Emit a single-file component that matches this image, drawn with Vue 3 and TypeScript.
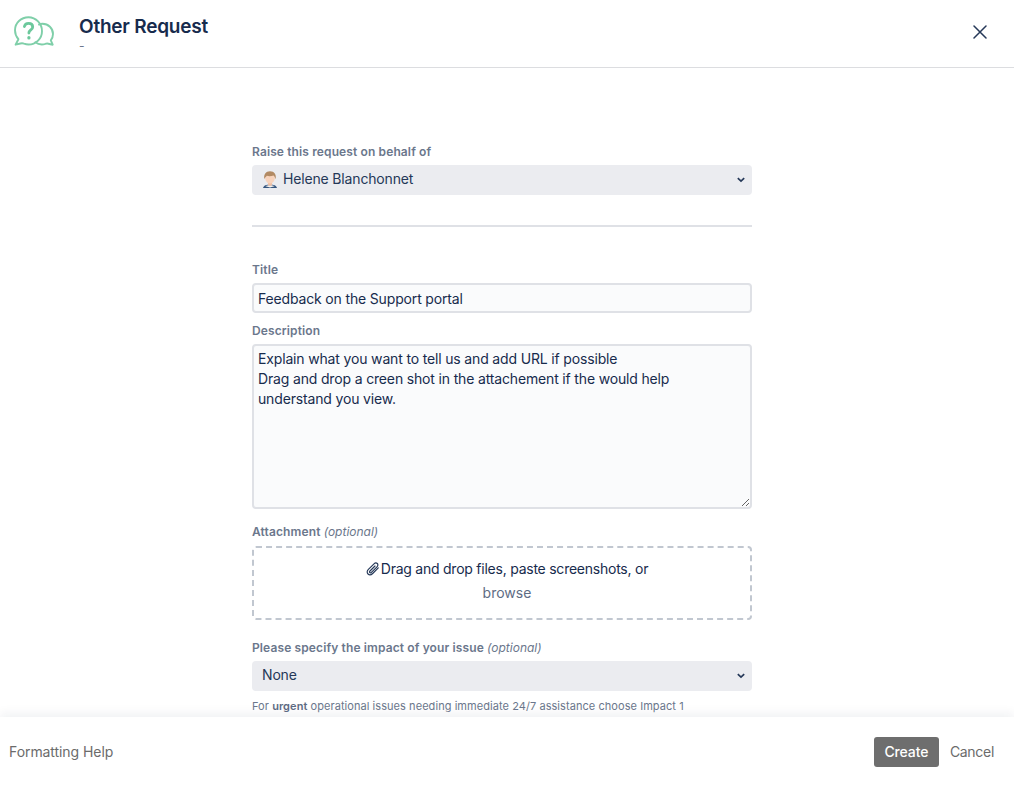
<script setup lang="ts">
const description = `Explain what you want to tell us and add URL if possible
Drag and drop a creen shot in the attachement if the would help
understand you view.`
</script>

<template>
  <div class="page">
    <header class="head">
      <svg class="logo" viewBox="0 0 42 32" width="42" height="32" fill="none" stroke="#7fcfa9" stroke-width="1.9" stroke-linejoin="round" stroke-linecap="round">
        <path d="M15.500 1.200C8 1.200 2 7 2 14.200c0 3.600 1.400 6.600 3.400 9L2.600 28.700l4.800-1.200c1.300-.3 2.500-.3 3.600.2 1.400.5 2.900.8 4.500.8 7.500 0 13.500-6 13.500-13.300S23 1.200 15.500 1.200Z" />
        <path d="M26 8.600c1-.5 2.200-.8 3.500-.8 5.800 0 10.500 4.500 10.500 10.200 0 2.400-.8 4.500-2.200 6.300l1.900 4.400-4.400-1c-1-.2-2-.2-3 .2-1.100.4-2.200.6-3.500.6-2.500 0-4.700-.8-6.500-2.200" />
        <path d="M11.400 10.600c.4-2 2-3.200 4.200-3.200 2.400 0 4.100 1.400 4.100 3.500 0 3.100-3.800 3-3.800 6.200" stroke="#6cc89c" stroke-width="2.800" />
        <path d="M15.900 21.600v.3" stroke="#6cc89c" stroke-width="3.200" />
      </svg>
      <div class="head-text">
        <h1 class="title">Other Request</h1>
        <div class="subtitle">-</div>
      </div>
      <button class="close" type="button" aria-label="Close">
        <svg viewBox="0 0 14 14" width="14" height="14" fill="none" stroke="#253858" stroke-width="1.500" stroke-linecap="round">
          <path d="M1 1l12 12M13 1L1 13" />
        </svg>
      </button>
    </header>

    <main class="body">
      <form class="form" @submit.prevent>
        <label class="label">Raise this request on behalf of</label>
        <div class="select">
          <svg class="avatar" viewBox="0 0 16 18" width="16" height="18">
            <path d="M1 17c.6-2.700 3.400-3.600 7-3.600s6.400.9 7 3.600Z" fill="#35567f" />
            <path d="M3.500 15.200c1.200-.7 2.800-1 4.500-1s3.300.3 4.500 1L8 16.600Z" fill="#f6f1ec" />
            <rect x="6" y="10.500" width="4" height="4.300" rx="1.500" fill="#eebfa4" />
            <ellipse cx="8" cy="7.300" rx="4.800" ry="5.300" fill="#f8d3bc" />
            <path d="M2.500 8.200C1.200 3.500 4 .2 8 .2c4.200 0 6.800 3.400 5.500 8-.5-1.800-1.100-3-2.100-3.700-2 .9-4.800 1-6.500.3-1 .8-1.900 1.900-2.400 3.400Z" fill="#b28a63" />
          </svg>
          <span class="value">Helene Blanchonnet</span>
          <svg class="chevron" viewBox="0 0 10 7" width="8" height="6" fill="none" stroke="#253858" stroke-width="2.100">
            <path d="M1 1.300l4 3.700 4-3.700" />
          </svg>
        </div>

        <hr class="rule" />

        <label class="label" for="title">Title</label>
        <input id="title" class="field" type="text" value="Feedback on the Support portal" />

        <label class="label desc-label" for="desc">Description</label>
        <textarea id="desc" class="field area" :value="description"></textarea>

        <label class="label attach-label">Attachment <em>(optional)</em></label>
        <div class="drop">
          <div class="drop-line">
            <svg viewBox="0 0 14 14" width="14" height="14" fill="none" stroke="#253858" stroke-width="1.150" stroke-linecap="round">
              <path d="M12.300 5.800 6.700 11.500c-1.500 1.500-3.500 1.700-4.700.5S.9 8.900 2.400 7.400L8 1.800c1-1 2.400-1.200 3.300-.3s.7 2.300-.3 3.300L5.400 10.400c-.5.500-1.200.6-1.600.2s-.3-1.100.2-1.600l5-5" />
            </svg>
            <span>Drag and drop files, paste screenshots, or</span>
          </div>
          <a class="browse">browse</a>
        </div>

        <label class="label impact-label">Please specify the impact of your issue <em>(optional)</em></label>
        <div class="select">
          <span class="value">None</span>
          <svg class="chevron" viewBox="0 0 10 7" width="8" height="6" fill="none" stroke="#253858" stroke-width="2.100">
            <path d="M1 1.300l4 3.700 4-3.700" />
          </svg>
        </div>
        <p class="help">For <strong>urgent</strong> operational issues needing immediate 24/7 assistance choose Impact 1</p>
      </form>
    </main>

    <footer class="foot">
      <a class="help-link">Formatting Help</a>
      <div class="actions">
        <button class="create" type="button">Create</button>
        <a class="cancel">Cancel</a>
      </div>
    </footer>
  </div>
</template>

<style>
html, body { margin: 0; height: 100%; overflow: hidden; background: #fff; }
</style>

<style scoped>
.page {
  width: 1014px;
  height: 787px;
  display: flex;
  flex-direction: column;
  overflow: hidden;
  background: #fff;
  font-family: Inter, "Liberation Sans", sans-serif;
  color: #172b4d;
}
.head {
  flex: 0 0 68px;
  box-sizing: border-box;
  border-bottom: 1px solid #dcdde0;
  display: flex;
  align-items: flex-start;
  padding-left: 13px;
}
.logo { margin-top: 16px; flex: none; }
.head-text { margin-left: 24px; padding-top: 15px; }
.title {
  margin: 0 0 -1px;
  font-size: 19px;
  line-height: 24px;
  font-weight: 600;
  letter-spacing: -0.22px;
  color: #172b4d;
}
.subtitle { font-size: 12px; line-height: 16px; color: #6b778c; }
.close {
  margin: 25px 27px 0 auto;
  padding: 0;
  width: 14px;
  height: 14px;
  border: 0;
  background: none;
  display: block;
}
.close svg { display: block; }
.body { flex: 1; min-height: 0; overflow: hidden; }
.form {
  width: 500px;
  margin: 76px 0 0 252px;
  display: flex;
  flex-direction: column;
}
.label {
  font-size: 12px;
  line-height: 16px;
  font-weight: 600;
  letter-spacing: 0.12px;
  color: #6b778c;
  margin-bottom: 5px;
}
.label em { font-weight: 400; font-style: italic; letter-spacing: 0; }
.select {
  height: 30px;
  background: #ebecf0;
  border-radius: 4px;
  display: flex;
  align-items: center;
  padding: 0 7px 0 10px;
  font-size: 14px;
  color: #253858;
}
.value { letter-spacing: -0.16px; line-height: 18px; padding-bottom: 3px; }
.avatar { margin-right: 5px; flex: none; }
.chevron { margin-left: auto; flex: none; }
.rule {
  width: 100%;
  height: 2px;
  margin: 30px 0 35px;
  border: 0;
  background: #dfe1e6;
}
.field {
  box-sizing: border-box;
  display: block;
  width: 100%;
  height: 30px;
  margin: 0;
  padding: 3px 4px;
  border: 2px solid #dfe1e6;
  border-radius: 4px;
  background: #fafbfc;
  font: 14px/20px Inter, "Liberation Sans", sans-serif;
  letter-spacing: -0.16px;
  color: #172b4d;
  outline: none;
}
.desc-label { margin-top: 10px; }
.area { height: 165px; resize: vertical; overflow: hidden; }
.attach-label { margin-top: 15px; margin-bottom: 6px; }
.drop {
  box-sizing: border-box;
  height: 74px;
  border: 2px dashed #c1c7d0;
  border-radius: 4px;
  display: flex;
  flex-direction: column;
  align-items: center;
  padding: 11px 0 0 10px;
  font-size: 14px;
  line-height: 20px;
}
.drop-line { display: flex; align-items: center; gap: 1px; color: #172b4d; letter-spacing: -0.24px; }
.browse { margin-top: 4px; color: #5e6c84; }
.impact-label { margin-top: 20px; }
.help {
  margin: 8px 0 0;
  font-size: 11px;
  line-height: 14px;
  letter-spacing: 0.06px;
  color: #6b778c;
}
.help strong { font-weight: 600; color: #5e6c84; }
.foot {
  position: relative;
  flex: 0 0 70px;
  box-sizing: border-box;
  display: flex;
  align-items: center;
  justify-content: space-between;
  padding: 0 20px 0 9px;
  background: #fff;
  box-shadow: 0 -4px 10px rgba(9, 30, 66, 0.06);
  font-size: 14px;
  color: #6b6b6b;
}
.help-link { letter-spacing: -0.07px; line-height: 18px; padding-bottom: 1px; }
.actions { display: flex; align-items: center; gap: 11px; }
.create {
  width: 65px;
  height: 30px;
  padding: 0 0 1px;
  border: 0;
  border-radius: 3px;
  background: #6e6e6e;
  color: #fff;
  font: 500 14px Inter, "Liberation Sans", sans-serif;
  letter-spacing: -0.1px;
}
.cancel { color: #6b6b6b; letter-spacing: -0.3px; line-height: 18px; padding-bottom: 1px; }
</style>
